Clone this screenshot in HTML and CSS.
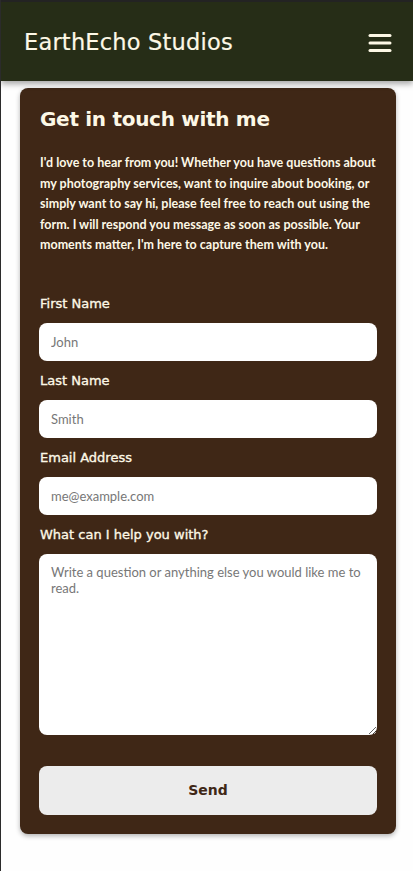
FILE: index.html
```html
<!DOCTYPE html>
<html lang="en">
<head>
<meta charset="utf-8">
<title>EarthEcho Studios - Contact</title>
<link rel="stylesheet" href="styles.css">
</head>
<body>
<header class="site-header">
  <span class="brand">EarthEcho Studios</span>
  <button class="menu-btn" aria-label="Menu">
    <svg width="24" height="20" viewBox="0 0 24 20"><g stroke="#fdf8e6" stroke-width="3" stroke-linecap="round"><line x1="2" y1="2.5" x2="22" y2="2.5"/><line x1="2" y1="10" x2="22" y2="10"/><line x1="2" y1="17.5" x2="22" y2="17.5"/></g></svg>
  </button>
</header>
<main class="page">
  <section class="card">
    <h1 class="title">Get in touch with me</h1>
    <p class="intro">I'd love to hear from you! Whether you have questions about my photography services, want to inquire about booking, or simply want to say hi, please feel free to reach out using the form. I will respond you message as soon as possible. Your moments matter, I'm here to capture them with you.</p>
    <form class="form">
      <label class="label" for="fn">First Name</label>
      <input class="field" id="fn" type="text" placeholder="John">
      <label class="label" for="ln">Last Name</label>
      <input class="field" id="ln" type="text" placeholder="Smith">
      <label class="label" for="em">Email Address</label>
      <input class="field" id="em" type="email" placeholder="me@example.com">
      <label class="label" for="msg">What can I help you with?</label>
      <textarea class="field area" id="msg" placeholder="Write a question or anything else you would like me to read."></textarea>
      <button class="send" type="button">Send</button>
    </form>
  </section>
</main>
</body>
</html>
```

FILE: styles.css
```css
* { box-sizing: border-box; }
html, body { margin: 0; padding: 0; }
body {
  background: #fefefe;
  border-left: 1px solid #2b2b2b;
  min-height: 871px;
  font-family: "Lato", "Liberation Sans", sans-serif;
}
.site-header {
  height: 81px;
  background: #262d17;
  border-top: 2px solid #232323;
  display: flex;
  align-items: center;
  justify-content: space-between;
  padding: 0 21px 0 23px;
  box-shadow: 0 3px 6px rgba(0,0,0,0.35);
  position: relative;
  z-index: 1;
}
.brand {
  color: #fdf8e6;
  font-family: "DejaVu Sans", sans-serif;
  font-size: 22.5px;
  letter-spacing: 0.2px;
  -webkit-text-stroke: 0.2px #fdf8e6;
}
.menu-btn {
  background: none;
  border: 0;
  padding: 0;
  display: flex;
  margin-top: 2px;
}
.page {
  padding: 7px 17px 30px 19px;
}
.card {
  background: #3f2716;
  border-radius: 8px;
  padding: 16px 19px 19px 19px;
  box-shadow: 0 2px 5px rgba(0,0,0,0.3);
  color: #fdf8e6;
}
.title {
  margin: 0 0 0 1px;
  font-family: "DejaVu Sans", sans-serif;
  font-weight: bold;
  font-size: 20px;
  line-height: 30px;
  letter-spacing: -0.3px;
}
.intro {
  margin: 19px 0 0 1px;
  font-size: 12.5px;
  font-weight: bold;
  line-height: 20.5px;
}
.form {
  display: flex;
  flex-direction: column;
  margin-top: 40px;
}
.label {
  font-family: "DejaVu Sans", sans-serif;
  font-size: 13px;
  font-weight: normal;
  -webkit-text-stroke: 0.35px #fdf8e6;
  line-height: 16px;
  margin: 0 0 11px 1px;
}
.field {
  height: 38px;
  border: 0;
  border-radius: 8px;
  background: #fff;
  padding: 0 12px;
  font-family: "Lato", sans-serif;
  font-size: 13px;
  color: #333;
  margin-bottom: 12px;
}
.field::placeholder { color: #777; }
.area {
  height: 181px;
  padding: 10px 12px;
  line-height: 16px;
  resize: vertical;
  margin-bottom: 31px;
}
.send {
  height: 49px;
  border: 0;
  border-radius: 8px;
  background: #ececec;
  color: #3f2716;
  font-family: "DejaVu Sans", sans-serif;
  font-weight: bold;
  font-size: 14px;
}
```
